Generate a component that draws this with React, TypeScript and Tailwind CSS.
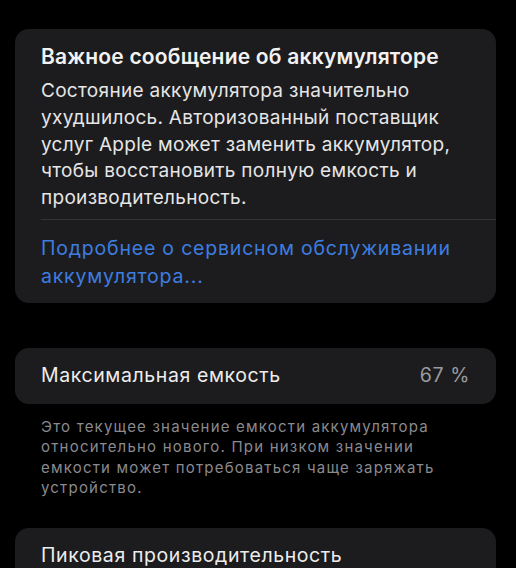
import React from "react";

export default function App() {
  return (
    <div className="w-[516px] h-[568px] overflow-hidden bg-black text-white" style={{ fontFamily: "Inter, 'Noto Sans', sans-serif" }}>
      <div className="pt-[29px] pl-[15px] pr-[20px]">
        <div className="bg-[#1c1c1e] rounded-[14px] pt-[14px] pb-[13px]">
          <div className="px-[26px]">
            <div className="text-[21px] font-semibold leading-[28px] text-[#f2f2f2] tracking-[0.2px]">Важное сообщение об аккумуляторе</div>
            <div className="mt-[7px] text-[19px] leading-[26.8px] text-[#e6e6e6] tracking-[0.3px]">
              Состояние аккумулятора значительно ухудшилось. Авторизованный поставщик услуг Apple может заменить аккумулятор, чтобы восстановить полную емкость и производительность.
            </div>
          </div>
          <div className="ml-[26px] mt-[7px] h-px bg-[#333336]" />
          <div className="px-[26px] pt-[14px] text-[19.5px] leading-[28px] text-[#3e7de0] tracking-[0.8px]">
            Подробнее о сервисном обслуживании аккумулятора...
          </div>
        </div>
        <div className="mt-[45px] bg-[#1c1c1e] rounded-[14px] h-[56px] flex items-center justify-between px-[26px] text-[19.5px] tracking-[0.6px]">
          <span className="text-[#ededed]">Максимальная емкость</span>
          <span className="text-[#9a9a9e]">67 %</span>
        </div>
        <div className="px-[26px] pt-[13px] text-[15px] leading-[20.3px] text-[#8a8a8e] tracking-[1.2px]">
          Это текущее значение емкости аккумулятора относительно нового. При низком значении емкости может потребоваться чаще заряжать устройство.
        </div>
        <div className="mt-[30px] bg-[#1c1c1e] rounded-[14px] h-[60px] px-[26px] pt-[13px] text-[19.5px] leading-[28px] text-[#ededed] tracking-[0.6px]">
          Пиковая производительность
        </div>
      </div>
    </div>
  );
}
